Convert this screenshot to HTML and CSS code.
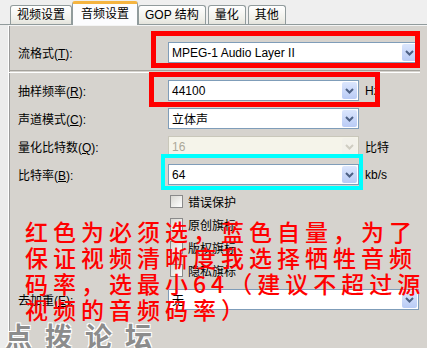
FILE: index.html
```html
<!DOCTYPE html>
<html lang="zh-CN">
<head>
    <meta charset="UTF-8">
    <title>音频设置</title>
    <link rel="stylesheet" href="styles.css">
</head>
<body>

<div class="window">
    <div class="tabs">
        <div class="tab">视频设置</div>
        <div class="tab active">音频设置</div>
        <div class="tab">GOP 结构</div>
        <div class="tab">量化</div>
        <div class="tab">其他</div>
    </div>

    <div class="panel">
        <div class="row">
            <label>流格式(<u>T</u>):</label>
            <div class="combo wide">
                <span>MPEG-1 Audio Layer II</span>
                <i class="drop"><svg width="9" height="6" viewBox="0 0 9 6"><path d="M1 1l3.5 3.5L8 1" /></svg></i>
            </div>
        </div>
        <div class="sep"></div>
        <div class="row">
            <label>抽样频率(<u>R</u>):</label>
            <div class="combo">
                <span>44100</span>
                <i class="drop"><svg width="9" height="6" viewBox="0 0 9 6"><path d="M1 1l3.5 3.5L8 1" /></svg></i>
            </div>
            <span class="unit">Hz</span>
        </div>
        <div class="row">
            <label>声道模式(<u>C</u>):</label>
            <div class="combo">
                <span>立体声</span>
                <i class="drop"><svg width="9" height="6" viewBox="0 0 9 6"><path d="M1 1l3.5 3.5L8 1" /></svg></i>
            </div>
        </div>
        <div class="row">
            <label>量化比特数(<u>Q</u>):</label>
            <div class="combo off">
                <span>16</span>
                <i class="drop"><svg width="9" height="6" viewBox="0 0 9 6"><path d="M1 1l3.5 3.5L8 1" /></svg></i>
            </div>
            <span class="unit">比特</span>
        </div>
        <div class="row">
            <label>比特率(<u>B</u>):</label>
            <div class="combo">
                <span>64</span>
                <i class="drop"><svg width="9" height="6" viewBox="0 0 9 6"><path d="M1 1l3.5 3.5L8 1" /></svg></i>
            </div>
            <span class="unit">kb/s</span>
        </div>

        <div class="checks">
            <div class="check"><i class="box"></i>错误保护</div>
            <div class="check"><i class="box"></i>原创旗标</div>
            <div class="check"><i class="box"></i>版权旗标</div>
            <div class="check"><i class="box"></i>隐私旗标</div>
        </div>

        <div class="row">
            <label>去加重(<u>E</u>):</label>
            <div class="combo wide">
                <span>无</span>
                <i class="drop"><svg width="9" height="6" viewBox="0 0 9 6"><path d="M1 1l3.5 3.5L8 1" /></svg></i>
            </div>
        </div>
    </div>

    <!-- annotations drawn over the dialog -->
    <div class="mark red mark-format"></div>
    <div class="mark red mark-rate"></div>
    <div class="mark cyan mark-bitrate"></div>

    <p class="note">红色为必须选，蓝色自量，为了<br>保证视频清晰度我选择牺牲音频<br>码率，选最小64（建议不超过源<br>视频的音频码率）</p>

    <div class="watermark">点拨论坛</div>
</div>

</body>
</html>
```

FILE: styles.css
```css
body {
    margin: 0;
    font-family: "Liberation Sans", "Noto Sans CJK SC", sans-serif;
    font-size: 12px;
    color: #000;
    background: #ececec;
}
.window {
    position: relative;
    width: 427px;
    height: 348px;
    overflow: hidden;
    background: #ececec;
}

/* tab strip */
.tabs {
    display: flex;
    align-items: flex-end;
    height: 24px;
    padding-left: 10px;
    border-bottom: 1px solid #919b9c;
    background: #efefef;
}
.tab {
    height: 18px;
    line-height: 18px;
    padding: 0 6px;
    margin-right: 2px;
    border: 1px solid #919b9c;
    border-bottom: none;
    border-radius: 3px 3px 0 0;
    background: linear-gradient(#ffffff, #f0f0ea 70%, #e4e3dc);
    font-size: 12px;
    white-space: nowrap;
}
.tab.active {
    height: 21px;
    line-height: 20px;
    padding: 0 8px;
    margin: 0 0 -1px -2px;
    border-top: 3px solid #f5b440;
    background: #fcfcfe;
    position: relative;
}

/* tab page */
.panel {
    height: 323px;
    margin-left: 8px;
    padding: 16px 0 0 9px;
    box-sizing: border-box;
    border-left: 1px solid #fff;
    border-top: 1px solid #f4f4f4;
    box-shadow: inset 1px 0 0 #9a9a9a;
    background: #d6d3ce;
}
.row {
    display: flex;
    align-items: center;
    height: 21px;
    margin-bottom: 7px;
}
.row label {
    width: 150px;
    flex: none;
}
.sep {
    height: 1px;
    margin: 1px 7px 7px -9px;
    border-top: 1px solid #a5a29c;
    border-bottom: 1px solid #fff;
}

.combo {
    display: flex;
    align-items: center;
    width: 191px;
    height: 21px;
    box-sizing: border-box;
    padding-left: 3px;
    border: 1px solid #7f9db9;
    background: #fff;
}
.combo.wide { width: 251px; }
.combo span { flex: 1; }
.drop {
    display: flex;
    align-items: center;
    justify-content: center;
    width: 15px;
    height: 17px;
    margin-right: 1px;
    border-radius: 2px;
    background: linear-gradient(#dbe6fd, #b9cbf5);
}
.drop path {
    fill: none;
    stroke: #4d6185;
    stroke-width: 2;
}
.combo.off {
    border-color: #c9c7ba;
    background: #f5f4ea;
    color: #aca899;
}
.combo.off .drop { background: #f2f1ea; }
.combo.off .drop path { stroke: #cfcdc2; }
.unit { margin-left: 6px; }

.checks {
    margin: -2px 0 7px 152px;
}
.check {
    display: flex;
    align-items: center;
    height: 23px;
}
.box {
    width: 13px;
    height: 13px;
    box-sizing: border-box;
    margin-right: 5px;
    border: 1px solid #8a8a8a;
    background: linear-gradient(135deg, #d9d8d2, #ffffff);
}

/* annotations */
.mark {
    position: absolute;
    box-sizing: border-box;
}
.mark.red { border: 5px solid #ff0000; }
.mark.cyan { border: 4px solid #00ffff; }
.mark-format { left: 151px; top: 31px; width: 269px; height: 37px; }
.mark-rate { left: 149px; top: 72px; width: 231px; height: 35px; }
.mark-bitrate { left: 161px; top: 154px; width: 202px; height: 36px; }

.note {
    position: absolute;
    left: 25px;
    top: 218px;
    margin: 0;
    font-family: "Noto Sans CJK SC", sans-serif;
    font-size: 23px;
    font-weight: 500;
    line-height: 26px;
    letter-spacing: 5px;
    color: #ff0000;
    white-space: nowrap;
}
.watermark {
    position: absolute;
    left: 5px;
    top: 323px;
    font-family: "Noto Sans CJK SC", sans-serif;
    font-size: 27px;
    font-weight: bold;
    line-height: 26px;
    letter-spacing: 13px;
    color: #8c8c8c;
    text-shadow: 1px 1px 0 #fff, -1px -1px 0 #fff, 1px -1px 0 #fff, -1px 1px 0 #fff;
}
```
